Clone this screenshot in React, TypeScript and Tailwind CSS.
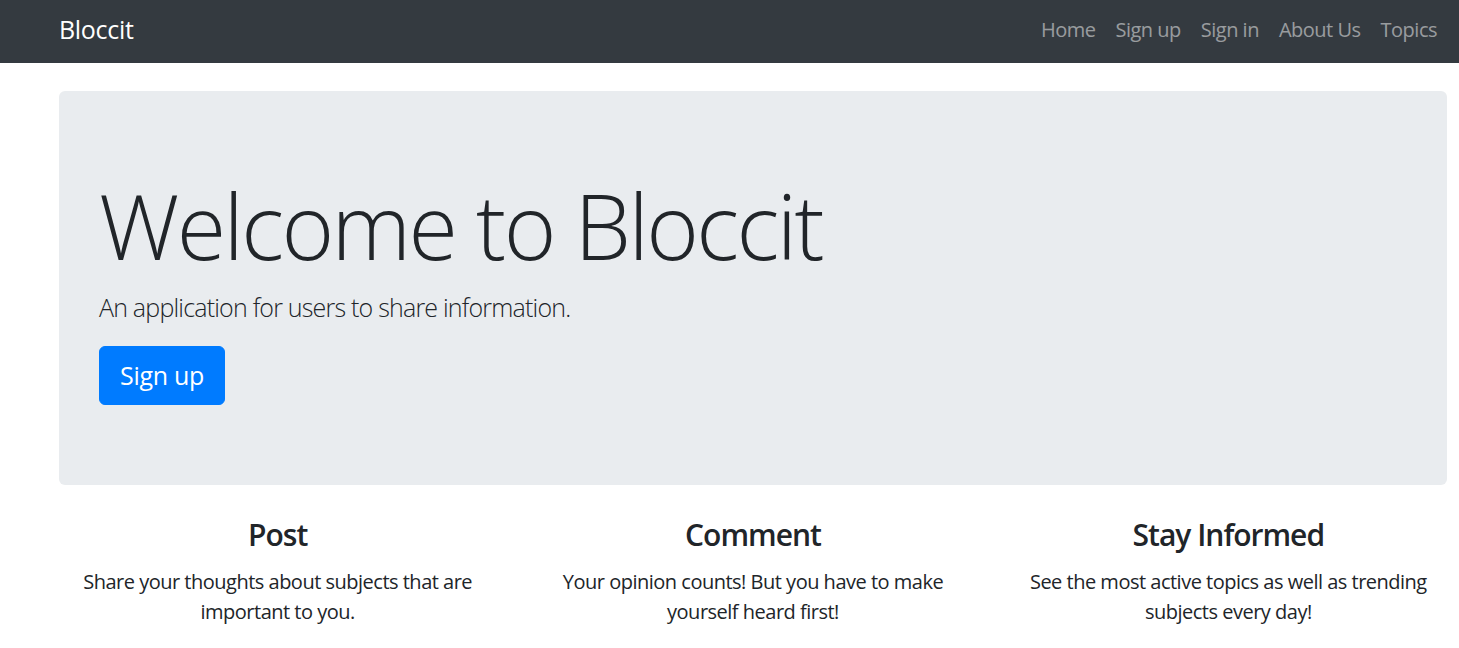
import React from "react";

const features = [
  { title: "Post", body: "Share your thoughts about subjects that are important to you." },
  { title: "Comment", body: "Your opinion counts! But you have to make yourself heard first!" },
  { title: "Stay Informed", body: "See the most active topics as well as trending subjects every day!" }
];

const links = ["Home", "Sign up", "Sign in", "About Us", "Topics"];

export default function App() {
  return (
    <div className="min-h-screen bg-white text-[#212529] font-['Segoe_UI','Open_Sans',sans-serif] text-[20px] leading-[1.5] overflow-hidden">
      {/* Navbar */}
      <nav className="h-[63px] bg-[#343a40]">
        <div className="ml-[59px] w-[1388px] h-full pb-[4px] flex items-center justify-between">
          <a className="text-white text-[25px] leading-[37px] tracking-[-0.3px]">Bloccit</a>
          <ul className="flex">
            {links.map((l) => (
              <li key={l}>
                <a className="block px-[10px] text-[20px] tracking-[-0.5px] text-white/50">{l}</a>
              </li>
            ))}
          </ul>
        </div>
      </nav>

      <div className="ml-[59px] w-[1388px]">
        {/* Jumbotron */}
        <div className="mt-[28px] bg-[#e9ecef] rounded-[6px] px-[40px] py-[80px]">
          <h1 className="text-[90px] font-light leading-[1.2] tracking-[-2.6px] mb-[10px]">Welcome to Bloccit</h1>
          <p className="text-[25px] font-light leading-[1.5] tracking-[-0.8px] mt-[2px] mb-[19px]">
            An application for users to share information.
          </p>
          <button className="bg-[#007bff] text-white text-[25px] leading-[37.5px] tracking-[-0.3px] px-[20px] py-[10px] rounded-[6px] border border-[#007bff]">
            Sign up
          </button>
        </div>

        {/* Features */}
        <div className="grid grid-cols-3 -mx-[19px] w-[1426px] mt-[32px]">
          {features.map((f) => (
            <div key={f.title} className="px-[19px] text-center">
              <h4 className="text-[30px] font-semibold leading-[1.2] tracking-[-1px] mb-[14px]">{f.title}</h4>
              <p className="tracking-[-0.5px]">{f.body}</p>
            </div>
          ))}
        </div>
      </div>
    </div>
  );
}
